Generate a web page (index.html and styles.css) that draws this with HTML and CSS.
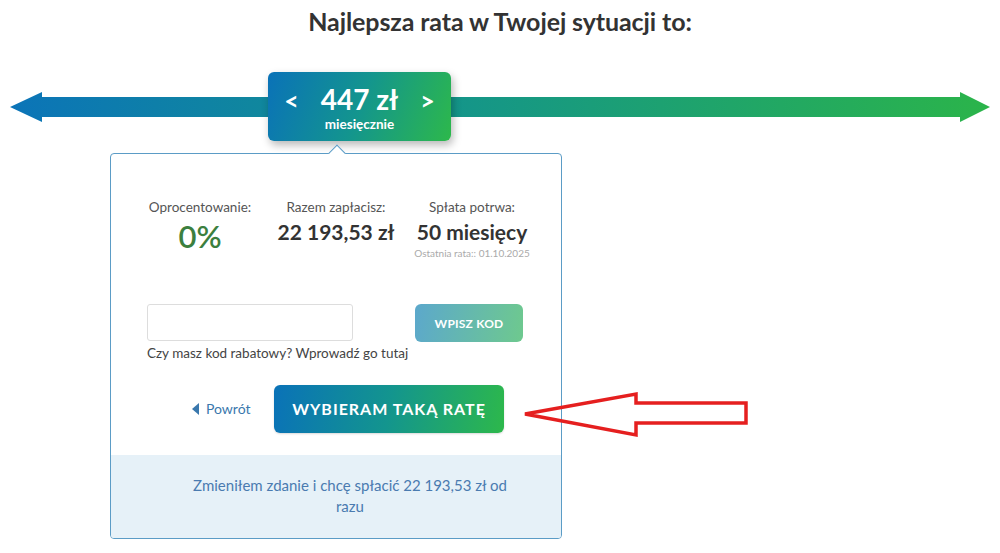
FILE: index.html
```html
<!DOCTYPE html>
<html lang="pl">
<head>
<meta charset="utf-8">
<title>Najlepsza rata</title>
<link rel="stylesheet" href="styles.css">
</head>
<body>
<div class="page">
  <h1 class="title">Najlepsza rata w Twojej sytuacji to:</h1>

  <div class="track">
    <svg class="track-arrow" width="1000" height="40" viewBox="0 0 1000 40" aria-hidden="true">
      <defs>
        <linearGradient id="tg" x1="0" y1="0" x2="1" y2="0">
          <stop offset="0" stop-color="#0b74b8"/>
          <stop offset="0.45" stop-color="#14958a"/>
          <stop offset="1" stop-color="#2bb44a"/>
        </linearGradient>
      </defs>
      <path d="M10 15 L42 0 L42 5 L960 5 L960 0 L990 15 L960 30 L960 25 L42 25 L42 30 Z" fill="url(#tg)"/>
    </svg>
    <div class="badge">
      <div class="badge-main">
        <span class="chev">&lt;</span>
        <span class="amount">447 zł</span>
        <span class="chev">&gt;</span>
      </div>
      <div class="badge-sub">miesięcznie</div>
    </div>
  </div>

  <div class="card">
    <span class="notch"></span>
    <div class="stats">
      <div class="stat">
        <div class="stat-label">Oprocentowanie:</div>
        <div class="stat-value green">0%</div>
      </div>
      <div class="stat">
        <div class="stat-label">Razem zapłacisz:</div>
        <div class="stat-value">22 193,53 zł</div>
      </div>
      <div class="stat">
        <div class="stat-label">Spłata potrwa:</div>
        <div class="stat-value">50 miesięcy</div>
        <div class="stat-note">Ostatnia rata:: 01.10.2025</div>
      </div>
    </div>

    <div class="code-row">
      <div class="code-field">
        <div class="code-input"></div>
        <div class="code-hint">Czy masz kod rabatowy? Wprowadź go tutaj</div>
      </div>
      <div class="code-btn">WPISZ KOD</div>
    </div>

    <div class="actions">
      <div class="back"><span class="back-tri"></span>Powrót</div>
      <div class="choose">WYBIERAM TAKĄ RATĘ</div>
    </div>

    <div class="payoff">Zmieniłem zdanie i chcę spłacić 22 193,53 zł od razu</div>
  </div>

  <svg class="red-arrow" width="240" height="56" viewBox="0 0 240 56" aria-hidden="true">
    <path d="M5 26 L116 6 L116 15 L226 15 L226 35 L116 35 L116 47 Z" fill="none" stroke="#e51f1f" stroke-width="3.5" stroke-linejoin="miter"/>
  </svg>
</div>
</body>
</html>
```

FILE: styles.css
```css
* { box-sizing: border-box; }
html, body { margin: 0; padding: 0; background: #fff; }
body {
  font-family: "Lato", "Noto Sans", "Liberation Sans", sans-serif;
  color: #333;
}
.page {
  position: relative;
  width: 1000px;
  height: 553px;
  overflow: hidden;
}
.title {
  margin: 0;
  padding-top: 6px;
  height: 72px;
  text-align: center;
  font-size: 25px;
  line-height: 30px;
  font-weight: 700;
  color: #333;
  letter-spacing: -0.1px;
}
.track {
  position: relative;
  height: 81px;
}
.track-arrow {
  position: absolute;
  left: 0;
  top: 20px;
}
.badge {
  position: relative;
  margin-left: 268px;
  width: 183px;
  height: 69px;
  border-radius: 6px;
  background: linear-gradient(110deg, #0a72b8 0%, #13958e 50%, #2db84b 100%);
  box-shadow: 2px 4px 8px rgba(0,0,0,0.28);
  color: #fff;
  text-align: center;
  padding-top: 12px;
}
.badge-main {
  display: flex;
  justify-content: center;
  align-items: baseline;
  gap: 22px;
  font-weight: 700;
  font-size: 28px;
  line-height: 30px;
}
.badge-main .chev { font-size: 25px; }
.badge-sub {
  font-weight: 700;
  font-size: 13.5px;
  line-height: 16px;
  margin-top: 1px;
}
.card {
  position: relative;
  margin-left: 110px;
  width: 452px;
  height: 386px;
  border: 1px solid #5b9cc6;
  border-radius: 4px;
  background: #fff;
  display: flex;
  flex-direction: column;
}
.notch {
  position: absolute;
  left: 220px;
  top: -7px;
  width: 12px;
  height: 12px;
  background: #fff;
  border-left: 1px solid #5b9cc6;
  border-top: 1px solid #5b9cc6;
  transform: rotate(45deg);
}
.stats {
  display: grid;
  grid-template-columns: repeat(3, 136px);
  justify-content: center;
  padding-top: 44px;
  height: 150px;
}
.stat { text-align: center; }
.stat-label {
  font-size: 13.5px;
  line-height: 18px;
  color: #555;
}
.stat-value {
  font-size: 21px;
  line-height: 30px;
  font-weight: 700;
  color: #333;
  margin-top: 1px;
}
.stat-value.green {
  color: #3c7f3e;
  font-size: 31px;
  line-height: 36px;
  font-weight: 600;
  margin-top: 2px;
}
.stat-note {
  font-size: 10px;
  line-height: 12px;
  color: #aaa;
}
.code-row {
  display: flex;
  align-items: flex-start;
  padding-left: 36px;
  gap: 62px;
  height: 80px;
}
.code-field {
  width: 206px;
  flex: none;
}
.code-input {
  width: 206px;
  height: 37px;
  border: 1px solid #ddd;
  border-radius: 3px;
  background: #fff;
}
.code-hint {
  font-size: 13.5px;
  line-height: 16px;
  color: #444;
  margin-top: 4px;
  white-space: nowrap;
}
.code-btn {
  flex: none;
  width: 108px;
  height: 38px;
  border-radius: 6px;
  background: linear-gradient(100deg, #5ca8cc 0%, #6ec98e 100%);
  color: #fff;
  font-weight: 700;
  font-size: 12px;
  display: flex;
  align-items: center;
  justify-content: center;
  letter-spacing: 0.2px;
}
.actions {
  display: flex;
  align-items: center;
  padding-left: 81px;
  gap: 20px;
  height: 49px;
}
.back {
  display: flex;
  align-items: center;
  gap: 7px;
  color: #3a78ad;
  font-size: 14px;
  width: 62px;
}
.back-tri {
  width: 0;
  height: 0;
  border-top: 6px solid transparent;
  border-bottom: 6px solid transparent;
  border-right: 7px solid #3a78ad;
}
.choose {
  width: 230px;
  height: 48px;
  border-radius: 6px;
  background: linear-gradient(100deg, #0a72b8 0%, #13958e 50%, #2db84b 100%);
  color: #fff;
  font-weight: 700;
  font-size: 16px;
  letter-spacing: 1px;
  display: flex;
  align-items: center;
  justify-content: center;
  box-shadow: 0 1px 2px rgba(0,0,0,0.15);
}
.payoff {
  margin-top: auto;
  height: 83px;
  background: #e6f1f8;
  color: #4a7bb0;
  font-size: 15px;
  line-height: 21px;
  text-align: center;
  padding: 20px 54px 0 82px;
  border-radius: 0 0 3px 3px;
}
.red-arrow {
  position: absolute;
  left: 520px;
  top: 388px;
}
```
